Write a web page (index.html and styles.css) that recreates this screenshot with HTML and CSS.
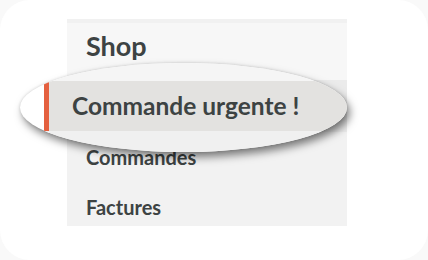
FILE: index.html
```html
<!DOCTYPE html>
<html lang="fr">
<head>
<meta charset="utf-8">
<title>Shop</title>
<link rel="stylesheet" href="styles.css">
</head>
<body>
<div class="screen">
  <nav class="panel">
    <div class="panel-title">Shop</div>
    <div class="nav-item nav-item--active"></div>
    <div class="nav-item">Commandes</div>
    <div class="nav-item">Factures</div>
  </nav>
  <div class="lens">
    <div class="lens-content">
      <div class="lens-top"></div>
      <div class="lens-row">Commande urgente !</div>
      <div class="lens-bottom"></div>
    </div>
  </div>
</div>
</body>
</html>
```
FILE: styles.css
```css
html {
  background: #f9f9f9;
}
body {
  margin: 0;
  font-family: "Lato", "Noto Sans", sans-serif;
  color: #3d4343;
}
.screen {
  position: relative;
  width: 428px;
  height: 260px;
  background: #ffffff;
  border-radius: 30px;
  box-sizing: border-box;
  padding: 19px 0 0 67px;
  overflow: hidden;
}
.panel {
  width: 280px;
  height: 207px;
  overflow: hidden;
  display: flex;
  flex-direction: column;
  background: #f2f2f2;
}
.panel-title {
  flex: none;
  background: #f7f7f7;
  border-top: 4px solid #f1f1f1;
  padding: 8px 0 19px 19px;
  font-size: 27px;
  line-height: 30px;
  font-weight: 700;
}
.nav-item {
  flex: none;
  height: 50px;
  line-height: 50px;
  padding-left: 19px;
  font-size: 20px;
  font-weight: 700;
  white-space: nowrap;
}
.nav-item--active {
  height: 52px;
  line-height: 52px;
  background: #ebebeb;
  border-left: 4px solid #e4603f;
  padding-left: 15px;
}
.lens {
  position: absolute;
  left: 20px;
  top: 63px;
  width: 327px;
  height: 89px;
  border-radius: 50%;
  overflow: hidden;
  background: #ffffff;
  box-shadow: 3px 5px 9px rgba(0, 0, 0, 0.5), 0 0 3px rgba(0, 0, 0, 0.15);
}
.lens-content {
  margin-left: 24px;
  height: 100%;
  display: flex;
  flex-direction: column;
}
.lens-top {
  flex: none;
  height: 18px;
  background: #f5f5f5;
}
.lens-row {
  flex: none;
  height: 50px;
  line-height: 50px;
  background: #e3e2e0;
  border-left: 5px solid #e4603f;
  padding-left: 23px;
  font-size: 24.5px;
  font-weight: 700;
  white-space: nowrap;
}
.lens-bottom {
  flex: 1;
  background: #f0f0f0;
}
```
